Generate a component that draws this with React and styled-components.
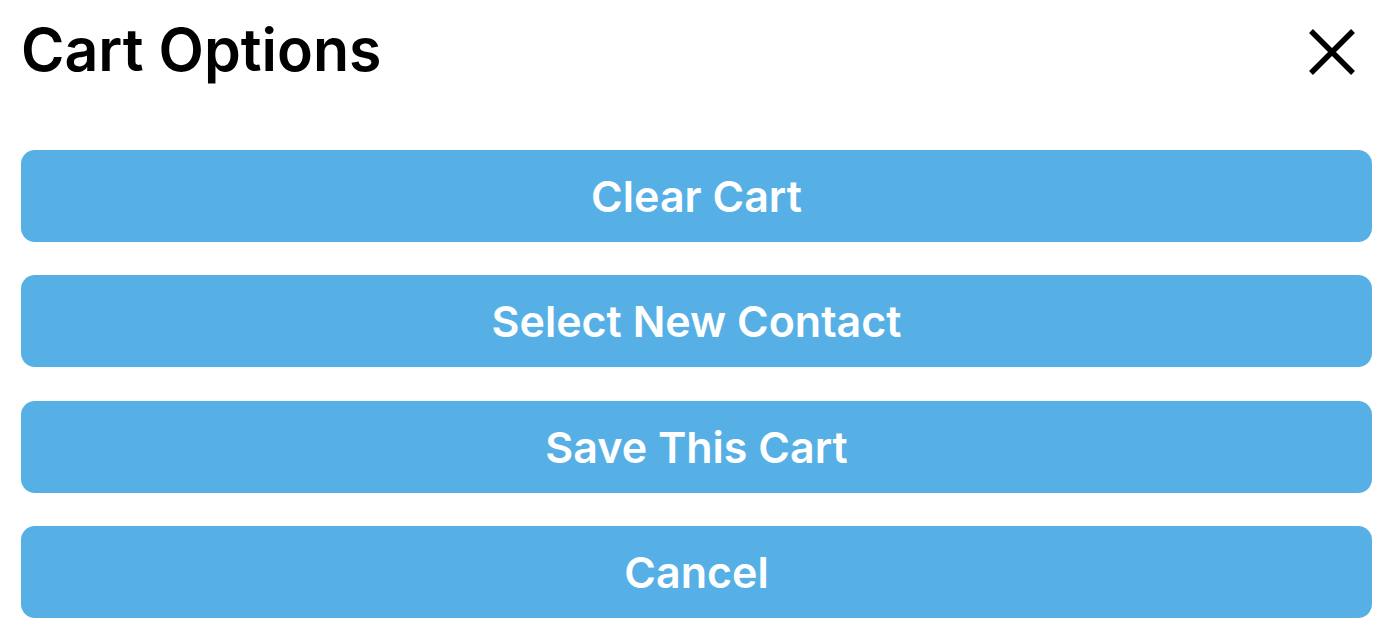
import React from 'react';
import styled, { createGlobalStyle } from 'styled-components';

const GlobalStyle = createGlobalStyle`
  html, body {
    margin: 0;
    padding: 0;
    background: #ffffff;
    font-family: Inter, "Noto Sans", sans-serif;
  }
`;

const Sheet = styled.div`
  padding: 0 16px 0 21px;
  box-sizing: border-box;
  width: 1388px;
`;

const Header = styled.div`
  display: flex;
  align-items: center;
  justify-content: space-between;
  height: 100px;
  margin-bottom: 50px;
`;

const Title = styled.h1`
  margin: 0;
  margin-top: -2px;
  font-size: 59px;
  font-weight: 600;
  color: #000;
  padding-left: 0;
`;

const CloseBtn = styled.button`
  border: 0;
  background: none;
  padding: 0;
  width: 48px;
  height: 48px;
  margin-right: 16px;
  margin-top: 3px;
  cursor: pointer;
  display: flex;
  align-items: center;
  justify-content: center;
`;

const List = styled.div`
  display: flex;
  flex-direction: column;
  gap: 33.3px;
`;

const OptionBtn = styled.button`
  height: 92px;
  width: 100%;
  border: 0;
  border-radius: 14px;
  background: #57b0e5;
  color: #fff;
  font-family: Inter, "Noto Sans", sans-serif;
  font-size: 43px;
  font-weight: 600;
  cursor: pointer;
`;

const options = ['Clear Cart', 'Select New Contact', 'Save This Cart', 'Cancel'];

const App = () => (
  <Sheet>
    <GlobalStyle />
    <Header>
      <Title>Cart Options</Title>
      <CloseBtn aria-label="Close">
        <svg width="48" height="48" viewBox="0 0 48 48">
          <path d="M3 3L45 45M45 3L3 45" stroke="#000" strokeWidth="5.5" />
        </svg>
      </CloseBtn>
    </Header>
    <List>
      {options.map(o => (
        <OptionBtn key={o}>{o}</OptionBtn>
      ))}
    </List>
  </Sheet>
);

export default App;
